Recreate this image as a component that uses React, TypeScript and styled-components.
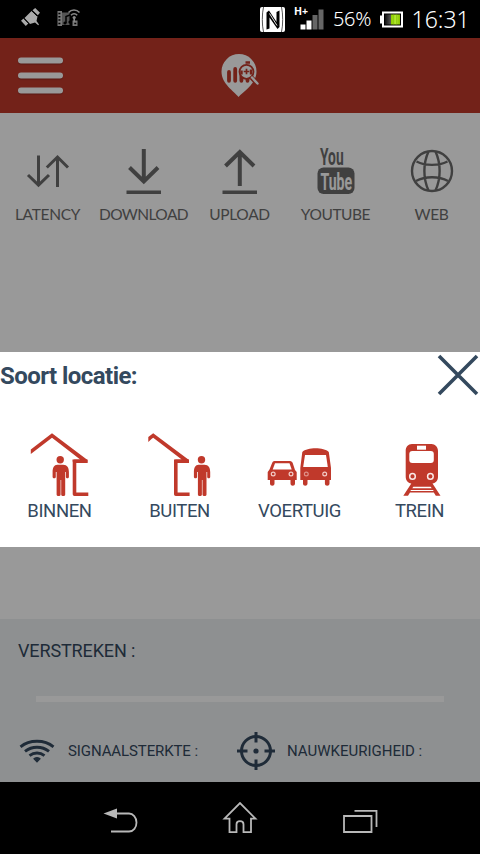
import React from "react";
import styled, { createGlobalStyle } from "styled-components";

const RED = "#c0392b";
const NAVY = "#34495e";
const GREY = "#6c6c6c";

const GlobalStyle = createGlobalStyle`
  * { box-sizing: border-box; }
  body { margin: 0; background: #000; }
  svg { display: block; flex: none; overflow: visible; }
`;

const Phone = styled.div`
  width: 480px;
  height: 854px;
  display: flex;
  flex-direction: column;
  overflow: hidden;
  background: #000;
  font-family: Roboto, sans-serif;
`;

const StatusBar = styled.header`
  height: 38px;
  display: flex;
  align-items: center;
  justify-content: space-between;
  padding: 0 10px 0 20px;
  color: #fff;
  font-family: "Noto Sans", sans-serif;
`;

const StatusGroup = styled.div<{ $gap: number }>`
  display: flex;
  align-items: center;
  gap: ${(p) => p.$gap}px;
`;

const StatusText = styled.span<{ $size: number; $width: number; $spacing?: number }>`
  width: ${(p) => p.$width}px;
  font-size: ${(p) => p.$size}px;
  font-weight: 300;
  line-height: 38px;
  height: 38px;
  letter-spacing: ${(p) => p.$spacing ?? 0}px;
  white-space: nowrap;
`;

const AppArea = styled.main`
  position: relative;
  height: 744px;
  display: flex;
  flex-direction: column;
  background: #fff;
`;

const TitleBar = styled.div`
  height: 75px;
  display: grid;
  grid-template-columns: 1fr auto 1fr;
  align-items: center;
  padding: 0 18px;
  background: ${RED};
`;

const MenuButton = styled.button`
  width: 45px;
  height: 36px;
  padding: 0;
  border: 0;
  background: none;
  display: flex;
  flex-direction: column;
  justify-content: space-between;
  transform: translateY(-0.5px);
`;

const MenuLine = styled.span`
  height: 6px;
  border-radius: 3px;
  background: #fff;
  box-shadow: 0 1px 1px rgba(0, 0, 0, 0.25);
`;

const Tabs = styled.nav`
  flex: 1;
  display: grid;
  grid-template-columns: repeat(5, 96px);
  align-content: start;
  padding-top: 34px;
`;

const Tab = styled.div`
  display: flex;
  flex-direction: column;
  align-items: center;
  gap: 9px;
`;

const TabLabel = styled.span<{ $spacing: number }>`
  font-family: Lato, sans-serif;
  font-size: 15.5px;
  line-height: 20px;
  color: ${GREY};
  letter-spacing: ${(p) => p.$spacing}px;
  margin-right: 1px;
  white-space: nowrap;
`;

const Panel = styled.section`
  height: 163px;
  padding: 20px 18px 0;
  background: #edf0f2;
  color: ${NAVY};
`;

const Elapsed = styled.div`
  font-size: 18px;
  line-height: 24px;
  letter-spacing: -0.12px;
`;

const Progress = styled.div`
  height: 6px;
  margin: 33px 18px 29px;
  background: #fff;
`;

const Metrics = styled.div`
  display: grid;
  grid-template-columns: 218px 1fr;
`;

const Metric = styled.div<{ $spacing: number }>`
  height: 40px;
  display: flex;
  align-items: center;
  gap: 11px;
  font-size: 15px;
  letter-spacing: ${(p) => p.$spacing}px;
  white-space: nowrap;
`;

const Scrim = styled.div`
  position: absolute;
  inset: 0;
  display: flex;
  flex-direction: column;
  padding-top: 314px;
  background: rgba(0, 0, 0, 0.4);
`;

const Dialog = styled.section`
  height: 195px;
  background: #fff;
  color: ${NAVY};
`;

const DialogHead = styled.div`
  height: 78px;
  display: flex;
  justify-content: space-between;
  align-items: flex-start;
`;

const DialogTitle = styled.h2`
  margin: 0;
  font-size: 24px;
  line-height: 48px;
  font-weight: 700;
  letter-spacing: -0.55px;
`;

const Choices = styled.div`
  display: grid;
  grid-template-columns: repeat(4, 120px);
`;

const Choice = styled.button`
  padding: 0;
  border: 0;
  background: none;
  color: ${NAVY};
  display: flex;
  flex-direction: column;
  align-items: center;
  gap: 1px;
`;

const ChoiceLabel = styled.span`
  font: 18.5px/24px Roboto, sans-serif;
  letter-spacing: -0.4px;
  margin-right: 1px;
`;

const NavBar = styled.footer`
  height: 72px;
  display: grid;
  grid-template-columns: repeat(3, 120px);
  justify-content: center;
  justify-items: center;
  align-items: center;
`;

const SatelliteIcon = () => (
  <svg width="22" height="22" viewBox="0 0 22 22" fill="#aaa">
    <path d="M4.500 10 11.500 3l6 5.500L16.500 13l2.500 3.600-.8.600L15 14.500 10 16z" />
    <path d="M12.500 2.200 15.200 0 20 4.700 17.800 7.300zM1 12.800 3.500 10.500 8.300 15.500 5.800 18z" />
    <path d="M12 3 17 8M4 10.500 8.800 15.500" stroke="#000" strokeWidth=".9" />
  </svg>
);

const MediaIcon = () => (
  <svg width="24" height="22" viewBox="0 0 24 22" fill="none">
    <path d="M.5 3h4.500v15H.5zM15.500 12.500h5V18h-5z" fill="#777" />
    <path d="M5 4.500h7.500V17H5z" fill="#555" />
    <path d="M1.400 5.500h2M1.400 8.800h2M1.400 12.100h2M1.400 15.500h2M17.300 15.500h2" stroke="#000" strokeWidth="1.500" />
    <path d="M9 15V8.500l5-2V14" stroke="#000" strokeWidth="1.500" />
    <circle cx="8" cy="15" r="1.600" fill="#000" />
    <circle cx="13" cy="14" r="1.600" fill="#000" />
    <path d="M11.500 4.500c3-3.500 8-3.500 11 0M14 7.300c1.700-2 4.500-2 6.200 0" stroke="#888" strokeWidth="1.500" />
    <circle cx="17.200" cy="9.500" r="1.600" fill="#888" />
    <path d="M17.200 10v4" stroke="#888" strokeWidth="1.600" />
  </svg>
);

const NfcIcon = () => (
  <svg width="25" height="25" viewBox="0 0 25 25">
    <rect width="25" height="25" rx="2" fill="#fff" />
    <path d="M3.500 0C1.900 7 1.900 18 3.500 25M21.500 0c1.600 7 1.600 18 0 25" fill="none" stroke="#555" strokeWidth="1" />
    <path d="M9.500 21.500 6.500 22.500V5.500L9 3.500l7.500 11.500V5l3-1.500V20l-2 2L9.500 10.500z" fill="#000" />
    <path d="M9.500 6.500 17 18.500" stroke="#fff" strokeWidth=".9" />
  </svg>
);

const SignalIcon = () => (
  <svg width="31" height="25" viewBox="0 0 31 25">
    <text x="0" y="7.500" fontFamily="Open Sans, sans-serif" fontSize="10.500" fontWeight="700" fill="#fff">H+</text>
    <path d="M6.500 17.500h5v5h-5zM12.500 13.500h5v9h-5z" fill="#fff" />
    <path d="M18.500 8h5v14.500h-5zM24.500 2.500h5v20h-5z" fill="#666" />
  </svg>
);

const BatteryIcon = () => (
  <svg width="23" height="17" viewBox="0 0 23 17">
    <defs>
      <linearGradient id="charge" x1="0" x2="1">
        <stop offset="0" stopColor="#111" />
        <stop offset=".38" stopColor="#555" />
        <stop offset=".42" stopColor="#8fd000" />
        <stop offset=".7" stopColor="#b0e82c" />
        <stop offset="1" stopColor="#88c400" />
      </linearGradient>
    </defs>
    <path d="M0 4.500h3v8H0z" fill="#fff" />
    <rect x="3" y="1.500" width="19" height="14" fill="#000" stroke="#fff" strokeWidth="2" />
    <rect x="5" y="3.500" width="15" height="10" fill="url(#charge)" />
    <path d="M13.500 3.500v10M16.500 3.500v10" stroke="#7fb90a" strokeWidth=".5" />
  </svg>
);

const PinLogo = () => (
  <svg width="40" height="46" viewBox="0 0 40 46">
    <path d="M18.500 44C14 38 1.500 31 1.500 18.500a17.500 17.500 0 0 1 35 0C36.500 31 23.500 38 18.500 44z" fill="#fff" />
    <path d="M9 19v8.800M15.200 16v11.800M21.400 23v4.800M27.500 25.500v2.300" stroke={RED} strokeWidth="3.800" strokeLinecap="round" />
    <circle cx="26.500" cy="18.800" r="7" fill="#fff" stroke={RED} strokeWidth="1.800" />
    <path d="M21.500 21.500v-4M31 16.500v5M25.500 9.500h4.500" stroke={RED} strokeWidth="2.400" />
    <path d="M23.700 18.500h5.600M26.500 15.700v5.600" stroke={RED} strokeWidth="1.700" />
    <path d="m31.500 24.500 5.500 6" stroke={RED} strokeWidth="4.600" />
    <path d="m32 24.500 5.500 6" stroke="#fff" strokeWidth="2.400" strokeLinecap="round" />
  </svg>
);

const TabSvg = styled.svg.attrs({ width: 60, height: 48, viewBox: "0 0 60 48" })`
  fill: none;
  stroke: ${GREY};
`;

const LatencyIcon = () => (
  <TabSvg strokeWidth="3">
    <path d="M20.500 8.500v30M10 28l10.500 10.200L31 28M39.500 40V10M28.800 20.500 39.500 10 50 20.500" />
  </TabSvg>
);
const DownloadIcon = () => (
  <TabSvg strokeWidth="4">
    <path d="M29.800 2v33M15.500 20.500 29.800 34.500 44 20.500" />
    <path d="M12.500 45.200h34.500" strokeWidth="3.500" />
  </TabSvg>
);
const UploadIcon = () => (
  <TabSvg strokeWidth="4">
    <path d="M29.800 5v34M15.500 19 29.800 5 44 19" />
    <path d="M12.500 45.200h34.500" strokeWidth="3.500" />
  </TabSvg>
);
const YoutubeIcon = () => (
  <TabSvg fontFamily="Roboto, sans-serif" fontWeight="700">
    <text transform="translate(14 18.300) scale(.6 1)" fontSize="23" fill={GREY} stroke="none">You</text>
    <rect x="11.500" y="20.500" width="37" height="26.500" rx="6" fill={GREY} stroke="none" />
    <text transform="translate(14.500 42.500) scale(.6 1)" fontSize="23.500" fill="#fff" stroke="none">Tube</text>
  </TabSvg>
);
const WebIcon = () => (
  <TabSvg strokeWidth="2.400">
    <circle cx="30" cy="24" r="20" />
    <path d="M26.500 4.500c-5.500 12-5.500 27 0 39M33.500 4.500c5.500 12 5.500 27 0 39M14.500 14.500c9 4.500 22 4.500 31 0M14 34c9-5 23-5 32 0" />
  </TabSvg>
);

const ChoiceSvg = styled.svg.attrs({ width: 80, height: 68, viewBox: "0 0 80 68" })`
  fill: ${RED};
`;

const Person = ({ x }: { x: number }) => (
  <g transform={`translate(${x} 0)`}>
    <circle cy="29.800" r="3.700" />
    <path d="M-3 34.700h6c4 0 5.700 3 5.700 7.300v5c0 1.800-3 1.800-3 0v-5h-.7v22.500c0 2-4 2-4 0V50h-.6v14.500c0 2-4 2-4 0V42h-.8v5c0 1.800-3.200 1.800-3.200 0v-5c0-4.300 1.600-7.300 4.600-7.300z" />
  </g>
);

const InsideIcon = () => (
  <ChoiceSvg>
    <path d="M10.800 19.500 32 3.200 67.500 30v2.800H54l-1.500-1.500V29.500h7.700L32 7.800 10.800 24z" />
    <path d="M67.500 31.200H54.500v33.100h13.800" fill="none" stroke={RED} strokeWidth="3.600" strokeLinejoin="round" />
    <Person x={40.2} />
  </ChoiceSvg>
);
const OutsideIcon = () => (
  <ChoiceSvg>
    <path d="M8.300 7 13.200 3.200 49 30v2.800H35.500l-1.500-1.500V29.500h7.700L13.200 7.800 11.500 9l-3.200 3z" />
    <path d="M49 31.200H35.800v33.100h13.800" fill="none" stroke={RED} strokeWidth="3.600" strokeLinejoin="round" />
    <Person x={61.5} />
  </ChoiceSvg>
);
const VehicleIcon = () => (
  <ChoiceSvg>
    <path d="M14.500 31h15.500c1.500 0 2.300 1 2.700 2l2.300 7 1.700 2v8h-1.700v3.500c0 3-4.500 3-4.500 0V50H14.500v3.500c0 3-4.500 3-4.500 0V50H7.700v-8l1.800-2.500 2.600-6.500c.5-1.300 1.200-2 2.400-2z" />
    <path d="M15 33.200h14.500l2.200 6.300H12.700z" fill="#fff" />
    <path d="M42.300 22c5-5 21.500-5 26.500 0L71 38v12h-1.500v3.500c0 3-4.600 3-4.600 0V50H47.500v3.500c0 3-4.500 3-4.500 0V50h-2.700V38z" />
    <path d="M45 25h21l1.800 12H43.200z" fill="#fff" />
    <g fill="none" stroke="#f3cdc8" strokeWidth="1.200">
      <circle cx="13.200" cy="44" r="1.900" />
      <circle cx="31" cy="44" r="1.900" />
      <circle cx="46.300" cy="44" r="1.900" strokeOpacity=".6" />
      <circle cx="64.700" cy="44" r="1.900" />
    </g>
  </ChoiceSvg>
);
const TrainIcon = () => (
  <ChoiceSvg>
    <path d="M32 14h19.500C55 14 58 17 58 21v25.500c0 4-2 6.500-5.500 7l8 12.200h-4.700l-2-3.200H30l-2 3.200h-4.700l8-12.200c-3.500-.5-5.600-3-5.600-7V21c0-4 2.300-7 6.300-7z" />
    <rect x="37" y="15.700" width="9" height="4" fill="#fff" />
    <rect x="29.300" y="21" width="24.500" height="12" rx="3" fill="#fff" />
    <path d="m33.300 56.800-1 1.500h19.400l-1-1.500zM31 60l-.7 1h23.400l-.7-1z" fill="#fff" />
    <g fill={RED} stroke="#fbe9e7" strokeWidth="1.500">
      <circle cx="32.500" cy="46.400" r="2.800" />
      <circle cx="50.400" cy="46.400" r="2.800" />
    </g>
  </ChoiceSvg>
);

const CloseIcon = () => (
  <svg width="44" height="46" viewBox="0 0 44 46">
    <path d="m3 4 38 38M41 4 3 42" stroke={NAVY} strokeWidth="3.600" />
  </svg>
);

const WifiIcon = () => (
  <svg width="39" height="28" viewBox="0 0 39 28" fill="none" stroke={NAVY} strokeWidth="2.900">
    <path d="M2.500 9.800c9-7.500 24-7.500 33 0M7 14.300c7-5.500 17-5.500 24 0M11.500 18.600c4.500-3.500 10.500-3.500 15 0" />
    <path d="M16.500 21.800c2-1.400 3-1.400 5 0L19 24.500z" fill={NAVY} strokeWidth="1.800" />
  </svg>
);

const TargetIcon = () => (
  <svg width="40" height="40" viewBox="0 0 40 40" fill="none" stroke={NAVY} strokeWidth="3">
    <circle cx="20" cy="20" r="14.500" />
    <path d="M20 1v10.500M20 28.500V39M1 20h10.500M28.500 20H39" />
    <circle cx="20" cy="20" r="2.600" fill={NAVY} stroke="none" />
  </svg>
);

const NavSvg = styled.svg.attrs({ width: 40, height: 40, viewBox: "0 0 40 40" })`
  fill: none;
  stroke: #b8b8b8;
  stroke-width: 1.8;
`;

const tabs = [
  { label: "LATENCY", icon: <LatencyIcon />, spacing: -0.3 },
  { label: "DOWNLOAD", icon: <DownloadIcon />, spacing: -0.6 },
  { label: "UPLOAD", icon: <UploadIcon />, spacing: -0.35 },
  { label: "YOUTUBE", icon: <YoutubeIcon />, spacing: -0.45 },
  { label: "WEB", icon: <WebIcon />, spacing: -0.4 },
];

const choices = [
  { label: "BINNEN", icon: <InsideIcon /> },
  { label: "BUITEN", icon: <OutsideIcon /> },
  { label: "VOERTUIG", icon: <VehicleIcon /> },
  { label: "TREIN", icon: <TrainIcon /> },
];

export default function App() {
  return (
    <Phone>
      <GlobalStyle />
      <StatusBar>
        <StatusGroup $gap={15}>
          <SatelliteIcon />
          <MediaIcon />
        </StatusGroup>
        <StatusGroup $gap={8.5}>
          <NfcIcon />
          <SignalIcon />
          <StatusText $size={20} $width={38.5} $spacing={-0.3}>56%</StatusText>
          <BatteryIcon />
          <StatusText $size={23} $width={58.5}>16:31</StatusText>
        </StatusGroup>
      </StatusBar>
      <AppArea>
        <TitleBar>
          <MenuButton aria-label="Menu">
            <MenuLine />
            <MenuLine />
            <MenuLine />
          </MenuButton>
          <PinLogo />
        </TitleBar>
        <Tabs>
          {tabs.map((t) => (
            <Tab key={t.label}>
              {t.icon}
              <TabLabel $spacing={t.spacing}>{t.label}</TabLabel>
            </Tab>
          ))}
        </Tabs>
        <Panel>
          <Elapsed>VERSTREKEN :</Elapsed>
          <Progress />
          <Metrics>
            <Metric $spacing={-0.1}>
              <WifiIcon />
              SIGNAALSTERKTE :
            </Metric>
            <Metric $spacing={0}>
              <TargetIcon />
              NAUWKEURIGHEID :
            </Metric>
          </Metrics>
        </Panel>
        <Scrim>
          <Dialog role="dialog">
            <DialogHead>
              <DialogTitle>Soort locatie:</DialogTitle>
              <CloseIcon />
            </DialogHead>
            <Choices>
              {choices.map((c) => (
                <Choice key={c.label}>
                  {c.icon}
                  <ChoiceLabel>{c.label}</ChoiceLabel>
                </Choice>
              ))}
            </Choices>
          </Dialog>
        </Scrim>
      </AppArea>
      <NavBar>
        <NavSvg>
          <path d="M15 15.500h14c4 0 7.500 4 7.500 9s-3 9-7.500 9H11" />
          <path d="m3.500 15.500 13.500-5v10z" fill="#b8b8b8" stroke="none" />
        </NavSvg>
        <NavSvg>
          <path d="M4.500 20.700 20 5l15.500 15.700H31v13.500h-7.500v-8c0-4-7-4-7 0v8H9.500V20.700z" />
        </NavSvg>
        <NavSvg>
          <path d="M4 18h27.500v16H4zM14.500 12.800h22V29" />
        </NavSvg>
      </NavBar>
    </Phone>
  );
}
